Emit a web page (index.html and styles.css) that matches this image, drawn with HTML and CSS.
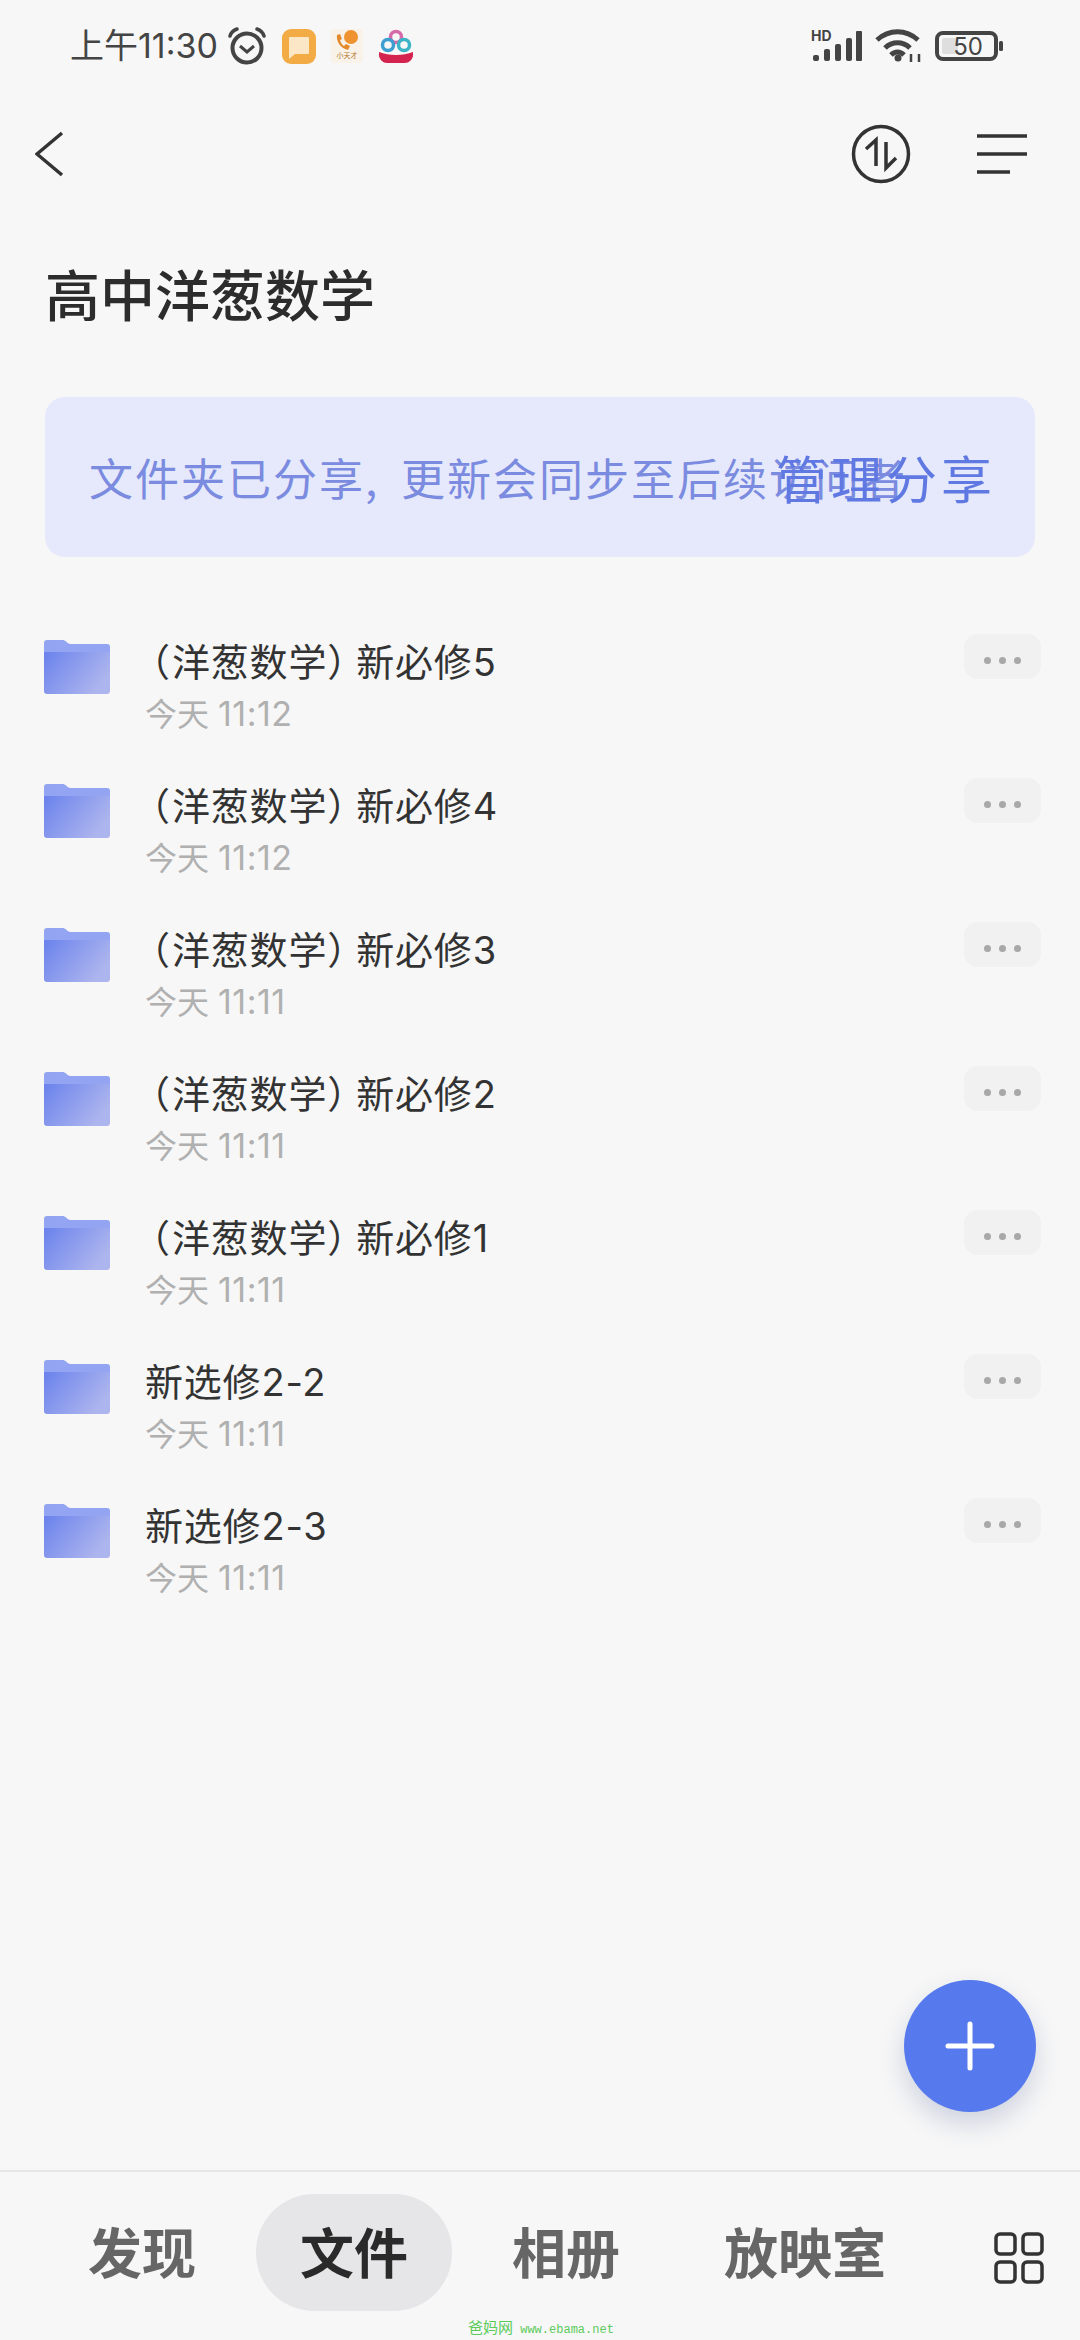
FILE: index.html
```html
<!DOCTYPE html>
<html>
	<head>
		<meta charset="utf-8" />
		<title>高中洋葱数学</title>
		<link rel="stylesheet" href="styles.css">
	</head>
	<body>
		<svg class="defs" width="0" height="0">
			<defs>
				<linearGradient id="folderFront" x1="0" y1="0" x2="1" y2="0.5">
					<stop offset="0" stop-color="#6a82ec"/>
					<stop offset="1" stop-color="#adb5ee"/>
				</linearGradient>
				<symbol id="folder" viewBox="0 0 66 54">
					<path d="M0 3a3 3 0 0 1 3-3h16c3 0 4 4 8 4h36a3 3 0 0 1 3 3v10H0z" fill="#93a4f3"/>
					<path d="M0 12h66v39a3 3 0 0 1-3 3H3a3 3 0 0 1-3-3z" fill="url(#folderFront)"/>
				</symbol>
			</defs>
		</svg>

		<!-- status bar -->
		<div class="status">
			<span class="time">上午11:30</span>
			<svg class="st-alarm" width="40" height="40" viewBox="0 0 40 40" fill="none" stroke="#444">
				<circle cx="20" cy="22" r="14.5" stroke-width="4"/>
				<path d="M13 20l7 6 7-6" stroke-width="3"/>
				<path d="M3 10c1-3 4-6 7-7M37 10c-1-3-4-6-7-7" stroke-width="3.5" stroke-linecap="round"/>
			</svg>
			<svg class="st-app" width="34" height="35" viewBox="0 0 34 35">
				<rect width="34" height="35" rx="9" fill="#f3ac45"/>
				<path d="M8 8h18a1 1 0 0 1 1 1v15a1 1 0 0 1-1 1H13l-6 5V9a1 1 0 0 1 1-1z" fill="#fbe6c6"/>
			</svg>
			<svg class="st-app" width="32" height="34" viewBox="0 0 32 34">
				<rect width="32" height="34" rx="4" fill="#f8f2e8"/>
				<circle cx="20" cy="8" r="7" fill="#ee9330"/>
				<path d="M6 6c-1 6 3 13 11 15l2-4-4-2-2 2c-2-1-3-3-4-6l2-1-2-5z" fill="#e38a2c"/>
				<text x="16" y="29" class="st-tiny">小天才</text>
			</svg>
			<svg class="st-app" width="36" height="34" viewBox="0 0 36 34" fill="none">
				<circle cx="18" cy="8" r="5.5" stroke="#d76aa8" stroke-width="3.5"/>
				<circle cx="10" cy="16" r="5.5" stroke="#3d9fd0" stroke-width="3.5"/>
				<circle cx="26" cy="16" r="5.5" stroke="#3db4c6" stroke-width="3.5"/>
				<path d="M1 23c10 4 24 4 34 0v4c-1 4-4 7-8 7H9c-4 0-7-3-8-7z" fill="#d5234f"/>
			</svg>
			<div class="status-right">
				<svg width="52" height="44" viewBox="0 -6 52 44" fill="#444">
					<text x="0" y="11" class="st-hd">HD</text>
					<rect x="2" y="25" width="6" height="6" rx="2"/>
					<rect x="13" y="19" width="6" height="12" rx="2"/>
					<rect x="24" y="14" width="6" height="17" rx="2"/>
					<rect x="35" y="8" width="6" height="23" rx="2"/>
					<rect x="45" y="1" width="6" height="30" rx="1"/>
				</svg>
				<svg width="48" height="34" viewBox="0 0 48 34" fill="none" stroke="#444" stroke-width="5">
					<path d="M2 11c12-11 29-11 41 0"/>
					<path d="M10 19c7-7 18-7 25 0"/>
					<path d="M16 26c4-4 9-4 13 0"/>
					<circle cx="23" cy="29" r="3.5" fill="#444" stroke="none"/>
					<path d="M36 25v8M44 25v8" stroke-width="2.5"/>
				</svg>
				<svg width="68" height="42" viewBox="0 -6 68 42">
					<rect x="2" y="2" width="59" height="26" rx="6" fill="none" stroke="#444" stroke-width="4"/>
					<rect x="7" y="7" width="16" height="16" rx="2" fill="#dedede"/>
					<text x="33" y="24" class="st-batt">50</text>
					<rect x="64" y="10" width="4" height="10" rx="1.5" fill="#444"/>
				</svg>
			</div>
		</div>

		<!-- top bar -->
		<div class="topbar">
			<svg width="30" height="46" viewBox="0 0 30 46" fill="none" stroke="#333" stroke-width="3.5">
				<path d="M27 2L2 23l25 21"/>
			</svg>
			<div class="topbar-right">
				<svg width="60" height="60" viewBox="0 0 60 60" fill="none" stroke="#333" stroke-width="3.5">
					<circle cx="30" cy="30" r="27.5"/>
					<path d="M15 25l10-9v26M45 34L35 44V18"/>
				</svg>
				<svg width="50" height="40" viewBox="0 0 50 40" fill="none" stroke="#333" stroke-width="3.5">
					<path d="M0 2h50M0 20h50M0 38h33"/>
				</svg>
			</div>
		</div>

		<h1 class="title">高中洋葱数学</h1>

		<div class="banner">
			<span class="banner-txt">文件夹已分享<span class="comma">,</span>更新会同步至后续访问者</span>
			<span class="banner-link">管理分享</span>
		</div>

		<ul class="list">
			<li class="row">
				<svg class="folder"><use href="#folder"/></svg>
				<div class="info">
					<div class="name"><span class="po">（</span>洋葱数学<span class="pc">）</span>新必修5</div>
					<div class="date">今天 <span>11:12</span></div>
				</div>
				<div class="more"><i></i><i></i><i></i></div>
			</li>
			<li class="row">
				<svg class="folder"><use href="#folder"/></svg>
				<div class="info">
					<div class="name"><span class="po">（</span>洋葱数学<span class="pc">）</span>新必修4</div>
					<div class="date">今天 <span>11:12</span></div>
				</div>
				<div class="more"><i></i><i></i><i></i></div>
			</li>
			<li class="row">
				<svg class="folder"><use href="#folder"/></svg>
				<div class="info">
					<div class="name"><span class="po">（</span>洋葱数学<span class="pc">）</span>新必修3</div>
					<div class="date">今天 <span>11:11</span></div>
				</div>
				<div class="more"><i></i><i></i><i></i></div>
			</li>
			<li class="row">
				<svg class="folder"><use href="#folder"/></svg>
				<div class="info">
					<div class="name"><span class="po">（</span>洋葱数学<span class="pc">）</span>新必修2</div>
					<div class="date">今天 <span>11:11</span></div>
				</div>
				<div class="more"><i></i><i></i><i></i></div>
			</li>
			<li class="row">
				<svg class="folder"><use href="#folder"/></svg>
				<div class="info">
					<div class="name"><span class="po">（</span>洋葱数学<span class="pc">）</span>新必修1</div>
					<div class="date">今天 <span>11:11</span></div>
				</div>
				<div class="more"><i></i><i></i><i></i></div>
			</li>
			<li class="row">
				<svg class="folder"><use href="#folder"/></svg>
				<div class="info">
					<div class="name">新选修2-2</div>
					<div class="date">今天 <span>11:11</span></div>
				</div>
				<div class="more"><i></i><i></i><i></i></div>
			</li>
			<li class="row">
				<svg class="folder"><use href="#folder"/></svg>
				<div class="info">
					<div class="name">新选修2-3</div>
					<div class="date">今天 <span>11:11</span></div>
				</div>
				<div class="more"><i></i><i></i><i></i></div>
			</li>
		</ul>

		<!-- floating add button -->
		<div class="fab">
			<svg width="50" height="50" viewBox="0 0 50 50" fill="none" stroke="#fff" stroke-width="5" stroke-linecap="round">
				<path d="M25 3v44M3 25h44"/>
			</svg>
		</div>

		<!-- bottom tabs -->
		<div class="tabs">
			<span class="tab">发现</span>
			<span class="tab active">文件</span>
			<span class="tab">相册</span>
			<span class="tab">放映室</span>
			<svg class="tab-grid" width="50" height="52" viewBox="0 0 50 52" fill="none" stroke="#333" stroke-width="3.5">
				<rect x="2" y="2" width="19" height="20" rx="4"/>
				<rect x="29" y="2" width="19" height="20" rx="4"/>
				<rect x="2" y="30" width="19" height="20" rx="4"/>
				<rect x="29" y="30" width="19" height="20" rx="4"/>
			</svg>
		</div>

		<div class="watermark"><span class="wm-cn">爸妈网</span> www.ebama.net</div>
	</body>
</html>
```

FILE: styles.css
```css
*{
	padding: 0;
	margin: 0;
	box-sizing: border-box;
}
html{
	width: 100%;
	height: 100%;
}
body{
	position: relative;
	overflow: hidden;
	width: 1080px;
	height: 2340px;
	display: flex;
	flex-direction: column;
	background: #f7f7f7;
	font-family: "Noto Sans CJK SC", "Noto Sans", sans-serif;
	color: #2e2e2e;
}
li{
	list-style: none;
}
.defs{
	position: absolute;
}

/*status*/
.status{
	height: 92px;
	flex: none;
	display: flex;
	align-items: center;
	padding: 0 77px 0 70px;
}
.time{
	font-family: Inter, "Noto Sans CJK SC", sans-serif;
	font-size: 34px;
	line-height: 40px;
	color: #444;
	width: 157px;
	white-space: nowrap;
}
.st-app{
	margin-left: 15px;
}
.st-tiny{
	font-size: 7px;
	fill: #b5762e;
	text-anchor: middle;
}
.status-right{
	margin-left: auto;
	display: flex;
	align-items: center;
	gap: 12px;
}
.st-hd{
	font-family: Inter, sans-serif;
	font-size: 14px;
	font-weight: 700;
}
.st-batt{
	font-family: Inter, sans-serif;
	font-size: 24px;
	fill: #444;
	text-anchor: middle;
}

/*topbar*/
.topbar{
	height: 124px;
	flex: none;
	display: flex;
	align-items: center;
	justify-content: space-between;
	padding: 0 53px 0 35px;
}
.topbar-right{
	display: flex;
	align-items: center;
	gap: 66px;
}
.title{
	height: 80px;
	margin-top: 36px;
	flex: none;
	padding-left: 45px;
	font-size: 55px;
	line-height: 80px;
	font-weight: 500;
	color: #2c2c2c;
}

/*banner*/
.banner{
	position: relative;
	margin: 65px 45px 0;
	height: 160px;
	flex: none;
	display: flex;
	align-items: center;
	padding-left: 44px;
	border-radius: 20px;
	background: #e5e9fb;
	white-space: nowrap;
}
.banner-txt{
	font-size: 44px;
	letter-spacing: 2px;
	color: #7b8bdf;
}
.comma{
	display: inline-block;
	width: 36px;
}
.banner-link{
	position: absolute;
	left: 731px;
	top: 50%;
	transform: translateY(-50%);
	font-size: 51px;
	letter-spacing: 4px;
	color: #6079e2;
}

/*list*/
.list{
	margin-top: 63px;
	flex: none;
}
.row{
	height: 144px;
	display: flex;
	align-items: flex-start;
	padding: 20px 39px 0 44px;
}
.folder{
	width: 66px;
	height: 54px;
	flex: none;
}
.info{
	margin-left: 35px;
	margin-top: -3px;
	flex: 1;
}
.name{
	font-family: Inter, "Noto Sans CJK SC", sans-serif;
	font-size: 38px;
	line-height: 50px;
	letter-spacing: 0.8px;
	color: #333;
}
.po{
	margin-left: -13px;
	letter-spacing: 2px;
}
.pc{
	letter-spacing: -9px;
}
.date{
	font-family: Inter, "Noto Sans CJK SC", sans-serif;
	margin-top: 5px;
	font-size: 32px;
	line-height: 44px;
	color: #b0b0b0;
}
.date span{
	font-size: 34px;
	letter-spacing: 0.5px;
}
.more{
	width: 77px;
	height: 45px;
	margin-top: -6px;
	display: flex;
	align-items: center;
	justify-content: center;
	gap: 8px;
	padding-top: 8px;
	border-radius: 14px;
	background: #f1f1f1;
}
.more i{
	width: 7px;
	height: 7px;
	border-radius: 50%;
	background: #a8a8a8;
}

/*fab*/
.fab{
	position: absolute;
	left: 904px;
	top: 1980px;
	width: 132px;
	height: 132px;
	display: flex;
	align-items: center;
	justify-content: center;
	border-radius: 50%;
	background: #5679ee;
	box-shadow: 0 12px 26px rgba(60,80,140,0.22);
}

/*tabs*/
.tabs{
	margin-top: auto;
	height: 170px;
	flex: none;
	display: flex;
	align-items: flex-start;
	gap: 16px;
	padding: 22px 36px 0 44px;
	border-top: 2px solid #e6e6e6;
}
.tab{
	height: 117px;
	padding: 0 44px;
	font-size: 54px;
	line-height: 113px;
	font-weight: 700;
	color: #666;
	white-space: nowrap;
}
.tab.active{
	border-radius: 58px;
	background: #e6e6e8;
	color: #2a2a2a;
}
.tab-grid{
	margin-left: auto;
	margin-top: 38px;
}
.watermark{
	position: absolute;
	left: 468px;
	top: 2319px;
	font-family: "Liberation Mono", monospace;
	font-size: 12px;
	line-height: 16px;
	color: #5ccb5c;
	white-space: nowrap;
}
.wm-cn{
	font-family: "Noto Sans CJK SC", sans-serif;
	font-size: 15px;
}
```
